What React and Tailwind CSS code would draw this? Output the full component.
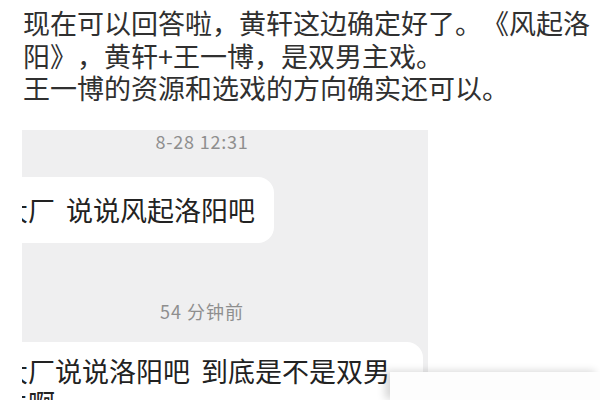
import React from "react";

const font = { fontFamily: '"Noto Sans CJK SC", "Noto Sans", sans-serif' };

export default function App() {
  return (
    <div
      className="relative w-[600px] h-[400px] overflow-hidden bg-white flex flex-col [text-spacing-trim:space-all]"
      style={font}
    >
      <div className="shrink-0 pl-[23px] pt-[7px] text-[27px] leading-[32.5px] text-[#303030] whitespace-nowrap">
        <div>现在可以回答啦，黄轩这边确定好了。《风起洛</div>
        <div>阳》，黄轩+王一博，是双男主戏。</div>
        <div>王一博的资源和选戏的方向确实还可以。</div>
      </div>

      <div className="ml-[22px] mt-[25.5px] w-[406px] flex-1 min-h-0 bg-[#efeff0] overflow-hidden flex flex-col">
        <div className="shrink-0 h-[47px] pt-[1px] pr-[46px] text-center text-[18px] leading-[20px] tracking-[0.8px] text-[#8e8e8e]">
          8-28 12:31
        </div>
        <div className="shrink-0 ml-[-60px] w-fit h-[66px] flex items-center bg-white rounded-r-[16px] pl-[39px] pr-[19px] text-[27px] leading-[32px] text-[#222] whitespace-nowrap">
          大厂<span className="inline-block w-[11px]" />说说风起洛阳吧
        </div>
        <div className="shrink-0 h-[99px] pt-[58px] pr-[46px] text-center text-[18px] leading-[20px] tracking-[1px] text-[#8e8e8e]">
          54 分钟前
        </div>
        <div className="shrink-0 ml-[-60px] w-[461px] h-[80px] bg-white rounded-tr-[16px] pl-[39px] pt-[13px] text-[27px] leading-[32px] text-[#222] whitespace-nowrap">
          <div>
            大厂说说洛阳吧<span className="inline-block w-[11px]" />到底是不是双男
          </div>
          <div>主啊</div>
        </div>
      </div>

      <div className="absolute left-[390px] top-[372px] right-0 bottom-0 bg-[#fdfdfd] shadow-[-5px_-1px_8px_rgba(0,0,0,0.16)]" />
    </div>
  );
}
